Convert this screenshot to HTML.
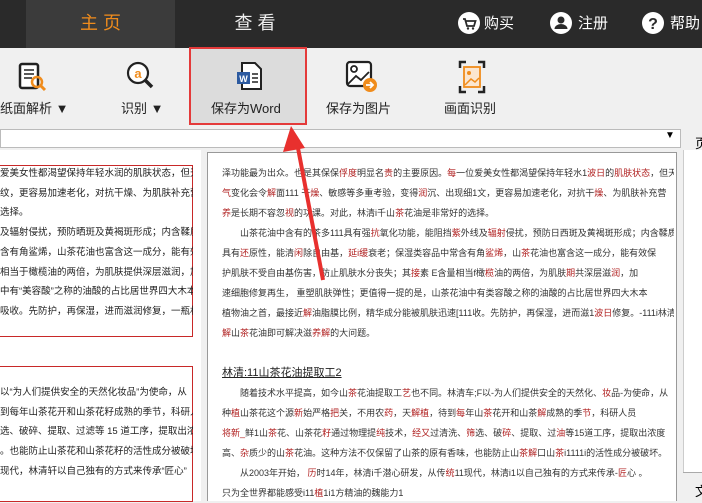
<!DOCTYPE html>
<html><head><meta charset="utf-8"><style>
*{margin:0;padding:0;box-sizing:border-box}
body{width:702px;height:501px;overflow:hidden;background:#f0f0f0;font-family:"Liberation Sans","Noto Sans CJK SC",sans-serif;position:relative}
.abs{position:absolute}
.top{left:0;top:0;width:702px;height:48px;background:#2a2a2a}
.tab{top:0;height:48px;font-size:18px;line-height:46px;text-align:center}
.tb{top:48px;left:0;width:702px;height:80px;background:#f0f0f0}
.lbl{font-size:13px;color:#222;top:98px;white-space:nowrap}
.lp{left:0;top:150px;width:201px;height:351px;background:#fff}
.lt{font-size:9.5px;line-height:19.7px;color:#222;white-space:nowrap}
.doc{left:207px;top:152px;width:470px;height:349px;background:#fff;border:1px solid #999;border-bottom:none;padding:10px 0 0 14px}
.doc p{font-size:9px;line-height:20px;color:#333;white-space:nowrap;overflow:hidden;width:452px}
.r{color:#b02020}
</style></head><body>
<div class="abs top"></div>
<div class="abs" style="left:26px;top:0;width:149px;height:48px;background:#3b3b3b"></div>
<div class="abs tab" style="left:26px;width:149px;color:#f08c1c">主 页</div>
<div class="abs tab" style="left:200px;width:110px;color:#eee">查 看</div>
<svg class="abs" style="left:458px;top:12px" width="22" height="22"><circle cx="11" cy="11" r="11" fill="#fff"/><path d="M5 7h2l2 7h7l1.5-5H8" stroke="#2a2a2a" stroke-width="1.8" fill="none"/><circle cx="10" cy="16.5" r="1.2" fill="#2a2a2a"/><circle cx="15" cy="16.5" r="1.2" fill="#2a2a2a"/></svg>
<div class="abs" style="left:484px;top:12px;color:#fff;font-size:15px">购买</div>
<svg class="abs" style="left:550px;top:12px" width="22" height="22"><circle cx="11" cy="11" r="11" fill="#fff"/><circle cx="11" cy="8" r="3.5" fill="#2a2a2a"/><path d="M4.5 17a6.5 5 0 0 1 13 0z" fill="#2a2a2a"/></svg>
<div class="abs" style="left:578px;top:12px;color:#fff;font-size:15px">注册</div>
<svg class="abs" style="left:642px;top:12px" width="22" height="22"><circle cx="11" cy="11" r="11" fill="#fff"/><text x="11" y="17" font-size="16" font-weight="bold" text-anchor="middle" fill="#2a2a2a" font-family="Liberation Sans">?</text></svg>
<div class="abs" style="left:670px;top:12px;color:#fff;font-size:15px">帮助</div>

<div class="abs tb"></div>
<div class="abs" style="left:189px;top:47px;width:118px;height:78px;background:#dcdcdc;border:2px solid #e43a3a"></div>
<svg class="abs" style="left:18px;top:62px" width="32" height="32"><rect x="2" y="2" width="18" height="24" rx="2" fill="#fff" stroke="#222" stroke-width="2.5"/><path d="M6 8h10M6 12h10M6 16h8" stroke="#222" stroke-width="1.5"/><circle cx="19" cy="20" r="5" fill="none" stroke="#f08c1c" stroke-width="2.5"/><path d="M23 24l4 4" stroke="#f08c1c" stroke-width="3"/></svg>
<div class="abs lbl" style="left:0">纸面解析 ▼</div>
<svg class="abs" style="left:125px;top:60px" width="32" height="32"><circle cx="13" cy="13" r="10" fill="#fff" stroke="#222" stroke-width="2.2"/><text x="13" y="18" font-size="13" text-anchor="middle" fill="#f08c1c" font-family="Liberation Sans" font-weight="bold">a</text><path d="M20 20l7 7" stroke="#222" stroke-width="3.5"/></svg>
<div class="abs lbl" style="left:121px">识别 ▼</div>
<svg class="abs" style="left:236px;top:62px" width="30" height="30"><path d="M6 1h13l6 6v20H6z" fill="#fff" stroke="#222" stroke-width="2"/><path d="M16 12h6M16 16h6M16 20h6" stroke="#222" stroke-width="1.5"/><rect x="1" y="10" width="13" height="12" fill="#2c5aa0"/><text x="7.5" y="20" font-size="9" text-anchor="middle" fill="#fff" font-family="Liberation Sans" font-weight="bold">W</text></svg>
<div class="abs lbl" style="left:211px">保存为Word</div>
<svg class="abs" style="left:345px;top:60px" width="34" height="34"><rect x="2" y="2" width="24" height="24" rx="3" fill="#fff" stroke="#222" stroke-width="2.2"/><circle cx="9" cy="9" r="3" fill="none" stroke="#222" stroke-width="1.8"/><path d="M3 24l8-8 5 4 8-8" stroke="#222" stroke-width="1.8" fill="none"/><circle cx="25" cy="25" r="7" fill="#f08c1c"/><path d="M21 25h7M25 22l3 3-3 3" stroke="#fff" stroke-width="1.8" fill="none"/></svg>
<div class="abs lbl" style="left:326px">保存为图片</div>
<svg class="abs" style="left:458px;top:60px" width="28" height="34"><path d="M2 8V2h6M20 2h6v6M26 26v6h-6M8 32H2v-6" stroke="#222" stroke-width="2.5" fill="none"/><rect x="6" y="7" width="16" height="20" fill="#fbe6d0" stroke="#f08c1c" stroke-width="1.8"/><circle cx="11" cy="13" r="2" fill="#f08c1c"/><path d="M7 25l6-6 4 3 4-4" stroke="#f08c1c" stroke-width="1.5" fill="none"/></svg>
<div class="abs lbl" style="left:444px">画面识别</div>

<div class="abs" style="left:0;top:129px;width:681px;height:19px;background:#fff;border:1px solid #bbb"></div>
<div class="abs" style="left:665px;top:130px;font-size:10px">▼</div>
<div class="abs" style="left:683px;top:128px;width:19px;height:373px;background:#fff;border-left:1px solid #ccc"></div>
<div class="abs" style="left:683px;top:128px;width:19px;height:22px;background:#f0f0f0;font-size:13px;padding:5px 0 0 12px">页</div>
<div class="abs" style="left:683px;top:472px;width:19px;height:29px;background:#f0f0f0;border-top:1px solid #aaa;font-size:13px;padding:8px 0 0 12px">文</div>

<div class="abs lp"></div>
<div class="abs" style="left:-2px;top:165px;width:195px;height:172px;border:1px solid #c82828"></div>
<div class="abs" style="left:-2px;top:366px;width:195px;height:136px;border:1px solid #c82828"></div>
<div class="abs" style="left:0;top:164px;width:193px;overflow:hidden">
<p class="lt">爱美女性都渴望保持年轻水润的肌肤状态，但天<br>纹，更容易加速老化，对抗干燥、为肌肤补充营<br>选择。<br>及辐射侵扰，预防晒斑及黄褐斑形成；内含鞣质<br>含有角鲨烯，山茶花油也富含这一成分，能有效保<br>相当于橄榄油的两倍，为肌肤提供深层滋润，加<br>中有“美容酸”之称的油酸的占比居世界四大木本<br>吸收。先防护，再保湿，进而滋润修复，一瓶林清</p></div>
<div class="abs" style="left:0;top:383px;width:193px;overflow:hidden">
<p class="lt">以“为人们提供安全的天然化妆品”为使命，从<br>到每年山茶花开和山茶花籽成熟的季节，科研人员<br>选、破碎、提取、过滤等 15 道工序，提取出浓度<br>。也能防止山茶花和山茶花籽的活性成分被破坏。<br>现代，林清轩以自己独有的方式来传承“匠心”</p></div>

<div class="abs doc">
<p>泽功能最为出众。也是其保保<span class="r">俘度</span>明显名<span class="r">贵</span>的主要原因。<span class="r">每</span>一位爱美女性都渴望保持年轻水1<span class="r">波日</span>的<span class="r">肌肤状态</span>，但天</p>
<p><span class="r">气</span>变化会令<span class="r">解</span>面111 干<span class="r">燥</span>、敏感等多重考验，变得<span class="r">润</span>沉、出现细1文，更容易加速老化，对抗干<span class="r">燥</span>、为肌肤补充营</p>
<p><span class="r">养</span>是长期不容忽<span class="r">视</span>的功课。对此，林清i千山<span class="r">茶</span>花油是非常好的选择。</p>
<p>&emsp;&emsp;山茶花油中含有的茶多111具有强<span class="r">抗</span>氧化功能，能阻挡<span class="r">紫</span>外线及<span class="r">辐射</span>侵扰，预防日西斑及黄褐斑形成；内含鞣质</p>
<p>具有<span class="r">还</span>原性，能清<span class="r">闲</span>除自由基，<span class="r">延i缓</span>衰老；保湿类容品中常含有角<span class="r">鲨烯</span>，山<span class="r">茶</span>花油也富含这一成分，能有效保</p>
<p>护肌肤不受自由基伤害，防止肌肤水分丧失；其<span class="r">接</span>素 E含量相当f橄<span class="r">榄</span>油的两倍，为肌肤<span class="r">期</span>共深层滋<span class="r">润</span>，加</p>
<p>速细胞修复再生， 重塑肌肤弹性；更值得一提的是，山茶花油中有类容酸之称的油酸的占比居世界四大木本</p>
<p>植物油之首，最接近<span class="r">解</span>油脂膜比例，精华成分能被肌肤迅速[111收。先防护，再保湿，进而滋1<span class="r">波日</span>修复。-111i林清</p>
<p><span class="r">解</span>山<span class="r">茶</span>花油即可解决滋<span class="r">养解</span>的大问题。</p>
<p>&nbsp;</p>
<p style="font-size:11px;text-decoration:underline;color:#222">林清:11山茶花油提取工2</p>
<p>&emsp;&emsp;随着技术水平提高，如今山<span class="r">茶</span>花油提取工<span class="r">艺</span>也不同。林清车;F以-为人们提供安全的天然化、<span class="r">妆</span>品-为使命，从</p>
<p>种<span class="r">植</span>山茶花这个源<span class="r">新</span>始严格<span class="r">把</span>关，不用农<span class="r">药</span>，天<span class="r">解植</span>，待到<span class="r">每</span>年山<span class="r">茶</span>花开和山茶<span class="r">解</span>成熟的季<span class="r">节</span>，科研人员</p>
<p><span class="r">将新_</span>鲜1山<span class="r">茶</span>花、山茶花<span class="r">籽</span>通过物理提<span class="r">纯</span>技术，<span class="r">经又</span>过清洗、<span class="r">筛</span>选、破<span class="r">碎</span>、提取、过<span class="r">油</span>等15道工序，提取出浓度</p>
<p>高、<span class="r">杂</span>质少的山<span class="r">茶</span>花油。这种方法不仅保留了山茶的原有香味，也能防止山<span class="r">茶解</span>口山<span class="r">茶</span>i1111i的活性成分被破坏。</p>
<p>&emsp;&emsp;从2003年开始， <span class="r">历</span>时14年，林清i千潜心研发，从传<span class="r">统</span>11现代，林清i1以自己独有的方式来传承-<span class="r">匠</span>心 。</p>
<p>只为全世界都能感受i11<span class="r">植</span>1i1方精油的魏能力1</p>
</div>

<svg class="abs" style="left:0;top:0" width="702" height="501"><path d="M323 280L298 148" stroke="#e8302e" stroke-width="4"/><path d="M291 126L283 152L305 148z" fill="#e8302e"/></svg>
</body></html>
